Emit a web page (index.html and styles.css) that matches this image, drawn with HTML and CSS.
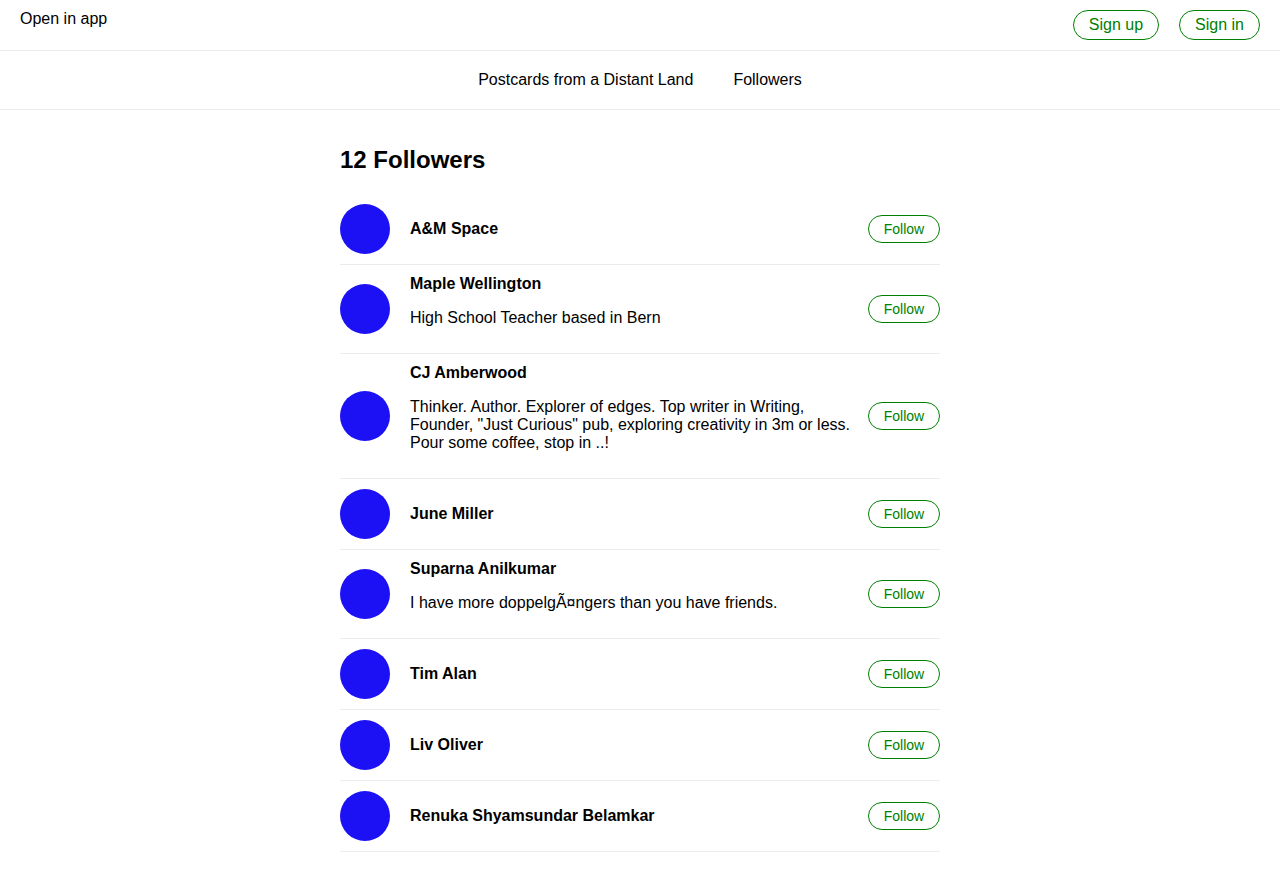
FILE: index.html
```html
<!DOCTYPE html>
<html lang="en">
<head>
<meta charset="utf-8">
<title>Followers</title>
<link rel="stylesheet" href="styles.css">
</head>
<body>
<header class="topbar">
  <a class="open-app" href="#">Open in app</a>
  <div class="auth">
    <a class="pill pill-lg" href="#">Sign up</a>
    <a class="pill pill-lg" href="#">Sign in</a>
  </div>
</header>
<nav class="subnav">
  <a href="#">Postcards from a Distant Land</a>
  <a href="#">Followers</a>
</nav>
<main class="content">
  <h2 class="title">12 Followers</h2>
  <ul class="list">
    <li class="row">
      <div class="avatar"></div>
      <div class="info"><div class="name">A&amp;M Space</div></div>
      <a class="pill pill-sm" href="#">Follow</a>
    </li>
    <li class="row">
      <div class="avatar"></div>
      <div class="info"><div class="name">Maple Wellington</div><p class="bio">High School Teacher based in Bern</p></div>
      <a class="pill pill-sm" href="#">Follow</a>
    </li>
    <li class="row">
      <div class="avatar"></div>
      <div class="info"><div class="name">CJ Amberwood</div><p class="bio">Thinker. Author. Explorer of edges. Top writer in Writing, Founder, "Just Curious" pub, exploring creativity in 3m or less. Pour some coffee, stop in ..!</p></div>
      <a class="pill pill-sm" href="#">Follow</a>
    </li>
    <li class="row">
      <div class="avatar"></div>
      <div class="info"><div class="name">June Miller</div></div>
      <a class="pill pill-sm" href="#">Follow</a>
    </li>
    <li class="row">
      <div class="avatar"></div>
      <div class="info"><div class="name">Suparna Anilkumar</div><p class="bio">I have more doppelgÃ¤ngers than you have friends.</p></div>
      <a class="pill pill-sm" href="#">Follow</a>
    </li>
    <li class="row">
      <div class="avatar"></div>
      <div class="info"><div class="name">Tim Alan</div></div>
      <a class="pill pill-sm" href="#">Follow</a>
    </li>
    <li class="row">
      <div class="avatar"></div>
      <div class="info"><div class="name">Liv Oliver</div></div>
      <a class="pill pill-sm" href="#">Follow</a>
    </li>
    <li class="row">
      <div class="avatar"></div>
      <div class="info"><div class="name">Renuka Shyamsundar Belamkar</div></div>
      <a class="pill pill-sm" href="#">Follow</a>
    </li>
  </ul>
</main>
</body>
</html>
```
FILE: styles.css
```css
* { box-sizing: border-box; }
html, body { margin: 0; padding: 0; background: #fff; }
body {
  font-family: "Liberation Sans", Arial, sans-serif;
  font-size: 16px;
  line-height: 18px;
  color: #000;
}
a { color: inherit; text-decoration: none; }

.topbar {
  display: flex;
  justify-content: space-between;
  align-items: flex-start;
  padding: 10px 20px;
  border-bottom: 1px solid #ebebeb;
}
.open-app { line-height: 18px; }
.auth { display: flex; gap: 20px; }

.pill {
  display: inline-flex;
  align-items: center;
  justify-content: center;
  border: 1px solid #008000;
  color: #008000;
}
.pill-lg {
  height: 30px;
  border-radius: 15px;
  padding: 0 15px;
  font-size: 16px;
}
.pill-sm {
  flex: none;
  width: 72px;
  height: 28px;
  border-radius: 14px;
  font-size: 14px;
  margin-left: 10px;
}

.subnav {
  display: flex;
  justify-content: center;
  gap: 40px;
  padding: 20px;
  border-bottom: 1px solid #ebebeb;
}

.content {
  width: 600px;
  margin: 0 auto;
  padding-top: 36px;
}
.title {
  margin: 0 0 20px;
  font-size: 24px;
  line-height: 28px;
  font-weight: bold;
}
.list { list-style: none; margin: 0; padding: 0; }
.row {
  display: flex;
  align-items: center;
  padding: 10px 0;
  border-bottom: 1px solid #ebebeb;
}
.avatar {
  flex: none;
  width: 50px;
  height: 50px;
  border-radius: 50%;
  background: #1c10f4;
  margin-right: 20px;
}
.info { flex: 1; min-width: 0; }
.name { font-weight: bold; }
.bio { margin: 16px 0; }
```
